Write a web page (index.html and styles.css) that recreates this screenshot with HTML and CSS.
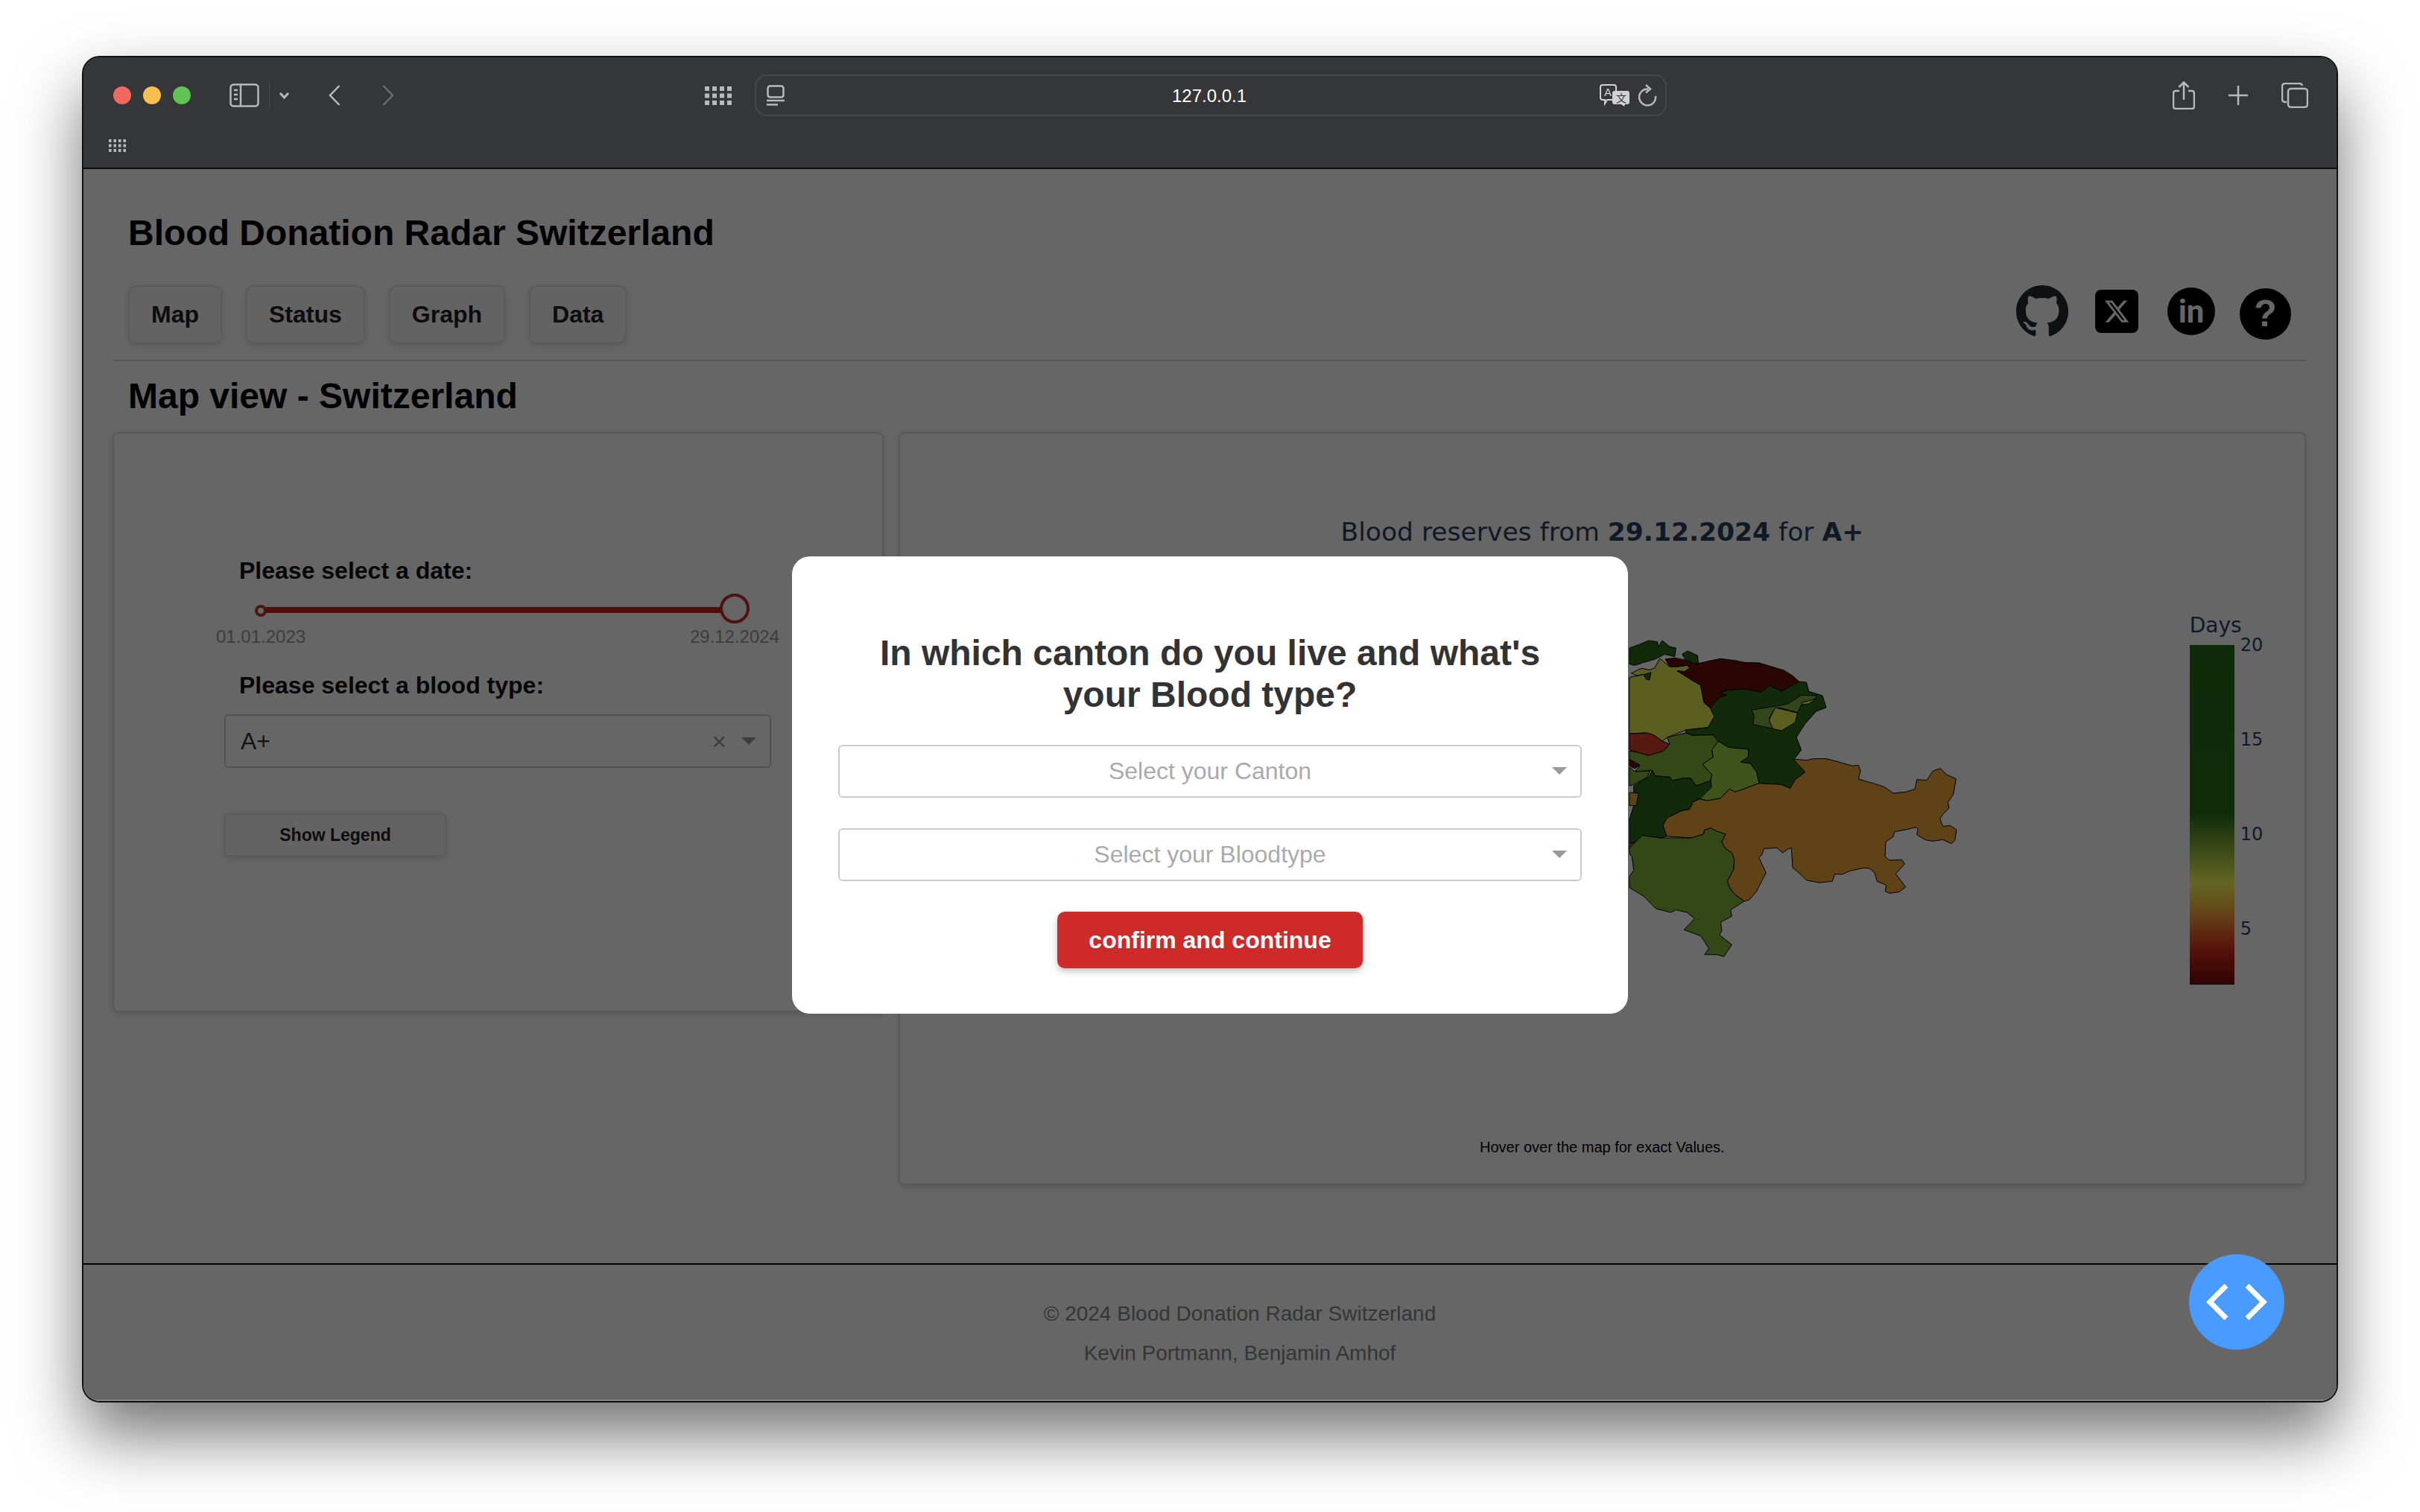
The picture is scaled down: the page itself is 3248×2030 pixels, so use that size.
FILE: index.html
```html
<!DOCTYPE html>
<html lang="en">
<head>
  <meta charset="UTF-8">
  <title>Blood Donation Radar Switzerland</title>
  <link rel="stylesheet" href="styles.css">
</head>
<body>
  <div class="window">
    <!-- browser toolbar -->
    <div class="toolbar">
      <div class="toolbar-row">
        <span class="light red"></span>
        <span class="light yellow"></span>
        <span class="light green"></span>
        <svg class="tb sidebar-icon" viewBox="0 0 40 32"><rect x="1.5" y="1.5" width="37" height="29" rx="4"/><path d="M15 2v28M6 9h5M6 15h5M6 21h5"/></svg>
        <span class="tb-divider"></span>
        <svg class="tb chevron-icon" viewBox="0 0 15 10"><path d="M2 2l5.500 6L13 2"/></svg>
        <svg class="tb back-icon" viewBox="0 0 16 28"><path d="M14.500 1L2 14l12.500 13"/></svg>
        <svg class="tb forward-icon" viewBox="0 0 16 28"><path d="M1.500 1L14 14 1.500 27"/></svg>
        <svg class="tb-dots grid-icon" viewBox="0 0 36 25"><g><rect x="0" y="0" width="6" height="6"/><rect x="10" y="0" width="6" height="6"/><rect x="20" y="0" width="6" height="6"/><rect x="30" y="0" width="6" height="6"/><rect x="0" y="9.500" width="6" height="6"/><rect x="10" y="9.500" width="6" height="6"/><rect x="20" y="9.500" width="6" height="6"/><rect x="30" y="9.500" width="6" height="6"/><rect x="0" y="19" width="6" height="6"/><rect x="10" y="19" width="6" height="6"/><rect x="20" y="19" width="6" height="6"/><rect x="30" y="19" width="6" height="6"/></g></svg>
        <div class="url-bar">
          <svg class="tb page-icon" viewBox="0 0 24 28"><rect x="1.500" y="1.500" width="21" height="15" rx="3"/><path d="M0 21h24M0 26.500h15"/></svg>
          <span class="url-text">127.0.0.1</span>
          <div class="url-right">
            <svg class="translate-icon" viewBox="0 0 40 30">
              <path class="bubble-a" d="M4 1h15a3 3 0 0 1 3 3v14a3 3 0 0 1-3 3H10l-3 5v-5H4a3 3 0 0 1-3-3V4a3 3 0 0 1 3-3z"/>
              <text x="6" y="16" class="glyph-a">A</text>
              <path class="bubble-b" d="M20 9h17a3 3 0 0 1 3 3v12a3 3 0 0 1-3 3h-3l-1 3-4-3h-9a3 3 0 0 1-3-3V12a3 3 0 0 1 3-3z"/>
              <text x="22" y="24" class="glyph-b">文</text>
            </svg>
            <svg class="tb reload-icon" viewBox="0 0 28 30"><path d="M15 6.500A11 11 0 1 0 25 16M12 1l6 5.500-6 5"/></svg>
          </div>
        </div>
        <svg class="tb share-icon" viewBox="0 0 30 38"><path d="M9 13H4a3 3 0 0 0-3 3v18a3 3 0 0 0 3 3h22a3 3 0 0 0 3-3V16a3 3 0 0 0-3-3h-5M15 25V2M8.500 8L15 1.500 21.500 8"/></svg>
        <svg class="tb plus-icon" viewBox="0 0 28 28"><path d="M14 1v26M1 14h26"/></svg>
        <svg class="tb tabs-icon" viewBox="0 0 36 34"><path d="M7 26H5a4 4 0 0 1-4-4V5a4 4 0 0 1 4-4h19a4 4 0 0 1 4 3"/><rect x="9" y="8" width="26" height="25" rx="4"/></svg>
      </div>
      <svg class="tb-dots tab-grid" viewBox="0 0 23 17"><g><rect x="0" y="0" width="3.500" height="4"/><rect x="6.500" y="0" width="3.500" height="4"/><rect x="13" y="0" width="3.500" height="4"/><rect x="19.500" y="0" width="3.500" height="4"/><rect x="0" y="6.500" width="3.500" height="4"/><rect x="6.500" y="6.500" width="3.500" height="4"/><rect x="13" y="6.500" width="3.500" height="4"/><rect x="19.500" y="6.500" width="3.500" height="4"/><rect x="0" y="13" width="3.500" height="4"/><rect x="6.500" y="13" width="3.500" height="4"/><rect x="13" y="13" width="3.500" height="4"/><rect x="19.500" y="13" width="3.500" height="4"/></g></svg>
    </div>

    <!-- the app page -->
    <div class="page">
      <main class="content">
        <h1 class="app-title">Blood Donation Radar Switzerland</h1>
        <div class="nav-row">
          <nav class="tabs">
            <button class="tab">Map</button>
            <button class="tab">Status</button>
            <button class="tab">Graph</button>
            <button class="tab">Data</button>
          </nav>
          <div class="socials">
            <svg class="github" viewBox="0 0 16 16"><path d="M8 0C3.580 0 0 3.580 0 8c0 3.540 2.290 6.530 5.470 7.590.400.070.550-.170.550-.380 0-.190-.010-.820-.010-1.490-2.010.370-2.530-.490-2.690-.940-.090-.230-.480-.940-.820-1.130-.280-.150-.680-.520-.010-.530.630-.010 1.080.580 1.230.820.720 1.210 1.870.870 2.330.660.070-.520.280-.870.510-1.070-1.780-.200-3.640-.890-3.640-3.950 0-.870.310-1.590.820-2.150-.080-.200-.360-1.020.080-2.120 0 0 .670-.210 2.200.820.640-.180 1.320-.270 2-.270.680 0 1.360.090 2 .270 1.530-1.040 2.200-.820 2.200-.820.440 1.100.160 1.920.080 2.120.510.560.820 1.270.820 2.150 0 3.070-1.870 3.750-3.650 3.950.290.250.540.730.540 1.480 0 1.070-.010 1.930-.010 2.200 0 .210.150.460.550.380A8.013 8.013 0 0 0 16 8c0-4.420-3.580-8-8-8z"/></svg>
            <span class="x-logo"><svg viewBox="0 0 24 24"><path fill-rule="evenodd" d="M18.244 2.250h3.308l-7.227 8.260 8.502 11.240H16.170l-5.214-6.817L4.990 21.750H1.680l7.730-8.835L1.254 2.250H8.080l4.713 6.231zm-1.161 17.520h1.833L7.084 4.126H5.117z"/></svg></span>
            <span class="linkedin">in</span>
            <span class="help">?</span>
          </div>
        </div>

        <h2 class="view-title">Map view - Switzerland</h2>

        <div class="panels">
          <section class="panel controls">
            <label class="field-label first">Please select a date:</label>
            <div class="slider">
              <span class="handle start"></span>
              <span class="handle end"></span>
            </div>
            <div class="slider-marks"><span>01.01.2023</span><span>29.12.2024</span></div>
            <label class="field-label second">Please select a blood type:</label>
            <div class="select-box">
              <span class="select-value">A+</span>
              <span class="select-clear">×</span>
              <span class="caret"></span>
            </div>
            <button class="legend-btn">Show Legend</button>
          </section>

          <section class="panel map-panel">
            <div class="plot-title">Blood reserves from <b>29.12.2024</b> for <b>A+</b></div>
            <div class="plot-row">
              <svg class="map" viewBox="0 0 1560 1560">
                <path fill="#2a6919" d="M78 270L120 255 155 240 190 245 195 265 210 240 240 265 265 270 260 305 220 295 180 315 130 330 100 340 78 335Z"/>
                <path fill="#2a6919" d="M290 295L312 282 352 300 355 330 340 335 305 320Z"/>
                <path fill="#e1ed50" d="M78 388L135 376 110 382 85 372 125 352 160 358 180 350 200 312 240 345 270 345 310 340 322 350 300 365 270 362 330 400 365 420 378 490 402 510 420 545 395 590 305 600 230 630 210 645 175 620 140 612 78 615Z"/>
                <path fill="#2a6919" d="M135 378L165 368 158 400 145 395Z"/>
                <path fill="#690f08" d="M222 315L260 310 310 320 345 335 400 322 445 313 500 320 540 328 600 330 650 345 700 360 735 382 760 405 690 445 665 432 640 420 610 448 540 435 470 440 442 450 470 460 440 470 402 510 378 490 365 420 330 400 270 362 300 365 320 350 310 340 270 345 240 345Z"/>
                <path fill="#2a6919" d="M305 600L395 590 420 545 402 510 440 470 470 460 442 450 470 440 540 435 610 448 640 420 665 432 690 445 760 405 790 408 800 445 855 462 870 510 830 525 785 575 750 630 770 680 740 720 785 770 745 800 725 835 690 820 600 815 590 770 565 735 525 730 555 710 558 678 475 670 435 645 415 620 330 622 305 610Z"/>
                <path fill="#7faf41" d="M570 520L660 505 715 495 770 460 835 462 810 488 770 500 755 530 680 510 660 520 640 555 655 595 610 585 575 578 580 545Z"/>
                <path fill="#e1ed50" d="M665 510L755 532 745 570 690 603 655 595 640 560Z"/>
                <path fill="#e1ed50" d="M770 490L830 475 800 495 775 498Z"/>
                <path fill="#d7412a" d="M78 615L150 612 175 620 210 645 240 658 215 685 155 703 110 690 78 680Z"/>
                <path fill="#82b43a" d="M78 685L110 690 155 703 215 685 240 658 230 630 305 612 330 622 415 620 435 645 410 680 415 710 372 738 410 780 405 805 345 825 325 795 290 795 250 805 240 790 180 785 170 762 100 768 120 745 78 720Z"/>
                <path fill="#690f08" d="M78 718L120 742 100 755 78 745Z"/>
                <path fill="#9ed241" d="M435 645L475 670 558 678 555 710 525 730 565 735 590 770 600 815 505 850 480 838 445 875 390 885 355 875 408 830 405 805 410 780 372 738 415 710 410 680Z"/>
                <path fill="#2a6919" d="M95 825L155 790 170 762 180 785 240 790 250 805 290 795 325 795 345 825 405 805 408 830 360 878 335 890 320 920 290 925 228 955 213 985 228 1028 200 1035 130 1025 120 1050 78 1055 78 960 95 905 110 855 95 850Z"/>
                <path fill="#eda539" d="M78 852L115 855 105 905 78 905Z"/>
                <path fill="#82b43a" d="M78 750L100 768 160 765 150 790 95 820 78 825Z"/>
                <path fill="#d7412a" d="M78 1055L100 1055 78 1078Z"/>
                <path fill="#82b43a" d="M78 1075L130 1025 200 1035 325 1035 375 1020 380 1003 405 995 430 1008 465 1020 450 1050 462 1075 490 1095 500 1120 498 1160 472 1210 482 1235 500 1260 540 1290 485 1325 490 1350 445 1375 450 1410 440 1425 490 1465 458 1513 430 1505 380 1505 398 1480 365 1430 298 1405 340 1360 310 1335 265 1325 245 1335 185 1320 135 1270 78 1235 78 1190 95 1165 88 1110 78 1100Z"/>
                <path fill="#eda539" d="M745 718L790 722 820 716 870 716 925 730 975 745 1000 742 1008 765 1000 798 1060 815 1105 830 1140 855 1190 850 1228 838 1235 800 1275 803 1300 765 1330 755 1355 780 1393 797 1382 860 1360 892 1365 915 1340 940 1328 958 1340 988 1370 985 1395 1003 1388 1045 1375 1058 1340 1042 1300 1048 1270 1043 1235 1022 1240 1000 1232 992 1190 1002 1145 1010 1140 1030 1110 1050 1107 1110 1125 1125 1175 1123 1186 1140 1150 1180 1190 1232 1165 1252 1125 1258 1108 1250 1112 1225 1075 1210 1065 1175 1045 1158 1020 1156 965 1168 935 1182 905 1180 895 1210 840 1215 790 1205 760 1175 735 1155 730 1075 715 1080 695 1095 672 1075 620 1078 610 1105 598 1112 628 1175 610 1210 590 1250 560 1285 540 1290 500 1260 482 1235 472 1210 498 1160 500 1120 490 1095 462 1075 450 1050 465 1020 430 1008 405 995 380 1003 375 1020 325 1035 228 1028 213 985 228 955 290 925 320 920 335 890 360 878 390 885 445 875 480 838 505 850 600 815 690 820 725 835 745 800 785 770 740 720Z"/>
              </svg>
              <div class="legend">
                <div class="legend-title">Days</div>
                <div class="legend-body">
                  <div class="legend-bar"></div>
                  <div class="legend-ticks"><span>20</span><span>15</span><span>10</span><span>5</span></div>
                </div>
              </div>
            </div>
            <p class="plot-note">Hover over the map for exact Values.</p>
          </section>
        </div>
      </main>

      <footer class="footer">
        <p>© 2024 Blood Donation Radar Switzerland</p>
        <p>Kevin Portmann, Benjamin Amhof</p>
      </footer>

      <!-- first visit dialog -->
      <div class="overlay">
        <div class="modal">
          <h2 class="modal-title">In which canton do you live and what's<br>your Blood type?</h2>
          <div class="modal-select">Select your Canton<span class="caret"></span></div>
          <div class="modal-select">Select your Bloodtype<span class="caret"></span></div>
          <button class="confirm-btn">confirm and continue</button>
        </div>
      </div>

      <button class="fab">
        <svg viewBox="0 0 84 48"><path d="M28 2L6 24l22 22M56 2l22 22-22 22"/></svg>
      </button>
    </div>
  </div>
</body>
</html>
```
FILE: styles.css
```css
html, body {
  margin: 0;
  height: 2030px;
  overflow: hidden;
}
body {
  background-color: #fff;
  padding: 75px 0 0 110px;
  box-sizing: border-box;
  font-family: "Liberation Sans", Arial, sans-serif;
}
button {
  font-family: inherit;
}
.window {
  width: 3028px;
  height: 1808px;
  box-sizing: border-box;
  border: 2px solid #111;
  border-radius: 24px;
  overflow: hidden;
  box-shadow: 0 44px 88px rgba(0, 0, 0, 0.55);
  display: flex;
  flex-direction: column;
  background-color: #666;
}

/* toolbar */
.toolbar {
  height: 150px;
  box-sizing: border-box;
  background-color: #353638;
  border-bottom: 2px solid #0c0c0c;
  padding-top: 23px;
}
.toolbar-row {
  display: flex;
  align-items: center;
  height: 56px;
  padding-left: 40px;
}
.light {
  width: 24px;
  height: 24px;
  border-radius: 50%;
  margin-right: 16px;
}
.light.red { background-color: #f1685e; }
.light.yellow { background-color: #f6bf4f; }
.light.green { background-color: #5fc454; margin-right: 0; }
.tb {
  fill: none;
  stroke: #b8b9bb;
  stroke-width: 2.5;
  flex: none;
}
.tb-dots {
  fill: #b8b9bb;
  flex: none;
}
.sidebar-icon { width: 40px; height: 32px; margin-left: 52px; }
.tb-divider {
  width: 1px;
  height: 36px;
  background-color: #4a4b4d;
  margin-left: 13px;
}
.chevron-icon { width: 15px; height: 10px; margin-left: 12px; stroke-width: 3; }
.back-icon { width: 16px; height: 28px; margin-left: 52px; }
.forward-icon { width: 16px; height: 28px; margin-left: 56px; stroke: #6c6d6f; }
.grid-icon { width: 36px; height: 25px; margin-left: 417px; }
.url-bar {
  width: 1224px;
  height: 56px;
  box-sizing: border-box;
  margin-left: 31px;
  border: 2px solid #47484a;
  border-radius: 16px;
  display: grid;
  grid-template-columns: 1fr auto 1fr;
  align-items: center;
  padding: 0 14px 0 10px;
}
.page-icon { width: 24px; height: 28px; margin-left: 4px; }
.url-text {
  color: #fff;
  font-size: 24px;
  font-weight: 500;
  margin-top: 1px;
}
.url-right {
  display: flex;
  align-items: center;
  justify-content: flex-end;
  gap: 10px;
  margin-right: -4px;
}
.translate-icon { width: 40px; height: 30px; }
.bubble-a { fill: #353638; stroke: #d0d1d2; stroke-width: 2; }
.bubble-b { fill: #d0d1d2; }
.glyph-a { fill: #d0d1d2; font-size: 15px; }
.glyph-b { fill: #353638; font-size: 14px; font-family: "Noto Sans CJK SC", sans-serif; }
.reload-icon { width: 28px; height: 30px; }
.share-icon { width: 30px; height: 38px; margin-left: 679px; }
.plus-icon { width: 28px; height: 28px; margin-left: 44px; }
.tabs-icon { width: 36px; height: 34px; margin-left: 44px; }
.tab-grid {
  display: block;
  width: 23px;
  height: 17px;
  margin: 31px 0 0 34px;
}

/* page */
.page {
  position: relative;
  flex: 1;
  background-color: #fff;
  display: flex;
  flex-direction: column;
}
.content {
  flex: 1;
  padding: 58px 41px 0 39px;
}
.app-title {
  margin: 0 0 0 21px;
  font-size: 48px;
  line-height: 56px;
  color: #000;
}
.nav-row {
  display: flex;
  justify-content: space-between;
  align-items: center;
  margin-top: 42px;
  padding: 0 20px 22px 21px;
  border-bottom: 2px solid #d4d4d4;
}
.tabs {
  display: flex;
  gap: 32px;
}
.tab {
  height: 78px;
  padding: 0 29px;
  font-size: 32px;
  font-weight: bold;
  color: #222;
  background-color: #f8f8f8;
  border: 2px solid #e4e4e4;
  border-radius: 10px;
  box-shadow: 0 3px 8px rgba(0, 0, 0, 0.15);
}
.socials {
  display: flex;
  align-items: center;
  margin-top: -8px;
}
.github { width: 70px; height: 70px; fill: #24292f; }
.x-logo {
  width: 58px;
  height: 58px;
  margin-left: 36px;
  background-color: #000;
  border-radius: 8px;
  display: flex;
  align-items: center;
  justify-content: center;
}
.x-logo svg { width: 36px; height: 36px; fill: #fff; }
.linkedin, .help {
  background-color: #000;
  color: #fff;
  border-radius: 50%;
  display: flex;
  align-items: center;
  justify-content: center;
  font-weight: bold;
}
.linkedin {
  width: 64px;
  height: 64px;
  margin-left: 39px;
  font-size: 42px;
  font-family: "Roboto", "Liberation Sans", sans-serif;
}
.help {
  width: 69px;
  height: 69px;
  margin: 6px 0 0 33px;
  font-size: 50px;
}
.view-title {
  margin: 19px 0 20px 21px;
  font-size: 48px;
  line-height: 56px;
  color: #000;
}
.panels {
  display: flex;
  align-items: flex-start;
  gap: 20px;
}
.panel {
  box-sizing: border-box;
  background-color: #fff;
  border: 2px solid #dcdcdc;
  border-radius: 8px;
  box-shadow: 0 3px 8px rgba(0, 0, 0, 0.15);
}

/* left panel */
.controls {
  width: 1035px;
  height: 779px;
  padding: 166px 0 0 148px;
}
.field-label {
  display: block;
  margin-left: 20px;
  font-size: 32px;
  line-height: 37px;
  font-weight: bold;
  color: #111;
}
.field-label.second { margin-top: 33px; }
.slider {
  position: relative;
  width: 622px;
  height: 8px;
  margin: 30px 0 0 52px;
  background-color: #c3251e;
}
.handle {
  position: absolute;
  box-sizing: border-box;
  border-radius: 50%;
  background-color: #fff;
  border: 4px solid #c32d26;
}
.handle.start {
  width: 16px;
  height: 16px;
  left: -11px;
  top: -3px;
}
.handle.end {
  width: 40px;
  height: 40px;
  right: -31px;
  top: -18px;
}
.slider-marks {
  display: flex;
  justify-content: space-between;
  width: 756px;
  margin: 18px 0 0 -11px;
  font-size: 24px;
  line-height: 28px;
  color: #999;
}
.select-box {
  display: flex;
  align-items: center;
  box-sizing: border-box;
  width: 734px;
  height: 72px;
  margin-top: 20px;
  padding: 0 18px 0 20px;
  border: 2px solid #ccc;
  border-radius: 6px;
}
.select-value {
  flex: 1;
  font-size: 32px;
  color: #333;
}
.select-clear {
  font-size: 34px;
  color: #999;
  margin-right: 20px;
}
.caret {
  width: 0;
  height: 0;
  border-left: 10px solid transparent;
  border-right: 10px solid transparent;
  border-top: 10px solid #999;
}
.legend-btn {
  display: block;
  width: 298px;
  height: 58px;
  margin-top: 61px;
  font-size: 23px;
  font-weight: bold;
  color: #222;
  background-color: #f8f8f8;
  border: 2px solid #e4e4e4;
  border-radius: 6px;
  box-shadow: 0 3px 8px rgba(0, 0, 0, 0.15);
}

/* right panel */
.map-panel {
  width: 1890px;
  height: 1011px;
  padding-top: 112px;
}
.plot-title {
  text-align: center;
  font-family: "DejaVu Sans", Verdana, sans-serif;
  font-size: 34.500px;
  line-height: 40px;
  color: #2a3f5f;
}
.plot-row {
  display: flex;
  align-items: flex-start;
  margin-top: 46px;
  padding-left: 953px;
}
.map {
  width: 520px;
  height: 520px;
  flex: none;
  fill-rule: nonzero;
  stroke: #000;
  stroke-width: 3;
  stroke-linejoin: round;
}
.legend {
  margin: 44px 0 0 258px;
  font-family: "DejaVu Sans", Verdana, sans-serif;
  color: #2a3f5f;
}
.legend-title {
  font-size: 28px;
  line-height: 32px;
  margin-bottom: 10px;
}
.legend-body {
  display: flex;
}
.legend-bar {
  width: 60px;
  height: 456px;
  background: linear-gradient(to bottom, #266a16 0%, #2a7019 50%, #fafc5a 70%, #fabe41 77%, #e65028 86.600%, #cd2516 91%, #730c08 100%);
}
.legend-ticks {
  display: flex;
  flex-direction: column;
  gap: 99px;
  margin: -14px 0 0 8px;
  font-size: 24px;
  line-height: 28px;
}
.plot-note {
  margin: 206px 0 0;
  text-align: center;
  font-size: 20px;
  line-height: 24px;
  color: #000;
}

/* footer */
.footer {
  height: 185px;
  box-sizing: border-box;
  border-top: 2px solid #000;
  padding: 49px 0 0 80px;
  text-align: center;
  font-size: 28px;
  line-height: 33px;
  color: #858585;
}
.footer p {
  margin: 0 0 20px;
}

/* dialog */
.overlay {
  position: absolute;
  inset: 0;
  z-index: 10;
  background-color: rgba(0, 0, 0, 0.6);
  box-shadow: inset 0 -2px 0 rgba(255, 255, 255, 0.2);
  display: flex;
  align-items: center;
  justify-content: center;
}
.modal {
  width: 1122px;
  height: 614px;
  box-sizing: border-box;
  padding: 102px 62px 0;
  background-color: #fff;
  border-radius: 24px;
  display: flex;
  flex-direction: column;
  align-items: center;
  gap: 41px;
}
.modal-title {
  margin: 0 0 -2px;
  text-align: center;
  font-size: 48px;
  line-height: 56px;
  color: #333;
}
.modal-select {
  position: relative;
  width: 100%;
  height: 71px;
  box-sizing: border-box;
  border: 2px solid #ccc;
  border-radius: 6px;
  display: flex;
  align-items: center;
  justify-content: center;
  font-size: 32px;
  color: #aaa;
}
.modal-select .caret {
  position: absolute;
  right: 18px;
  top: 28px;
}
.confirm-btn {
  width: 410px;
  height: 76px;
  border: none;
  border-radius: 10px;
  background-color: #ce2a29;
  color: #fff;
  font-size: 32px;
  font-weight: bold;
  box-shadow: 0 4px 10px rgba(0, 0, 0, 0.25);
}
.fab {
  position: absolute;
  z-index: 20;
  right: 70px;
  bottom: 69px;
  width: 128px;
  height: 128px;
  padding: 0;
  border: none;
  border-radius: 50%;
  background-color: #4a9bff;
  display: flex;
  align-items: center;
  justify-content: center;
}
.fab svg {
  width: 84px;
  height: 48px;
  fill: none;
  stroke: #fff;
  stroke-width: 7;
}
```
